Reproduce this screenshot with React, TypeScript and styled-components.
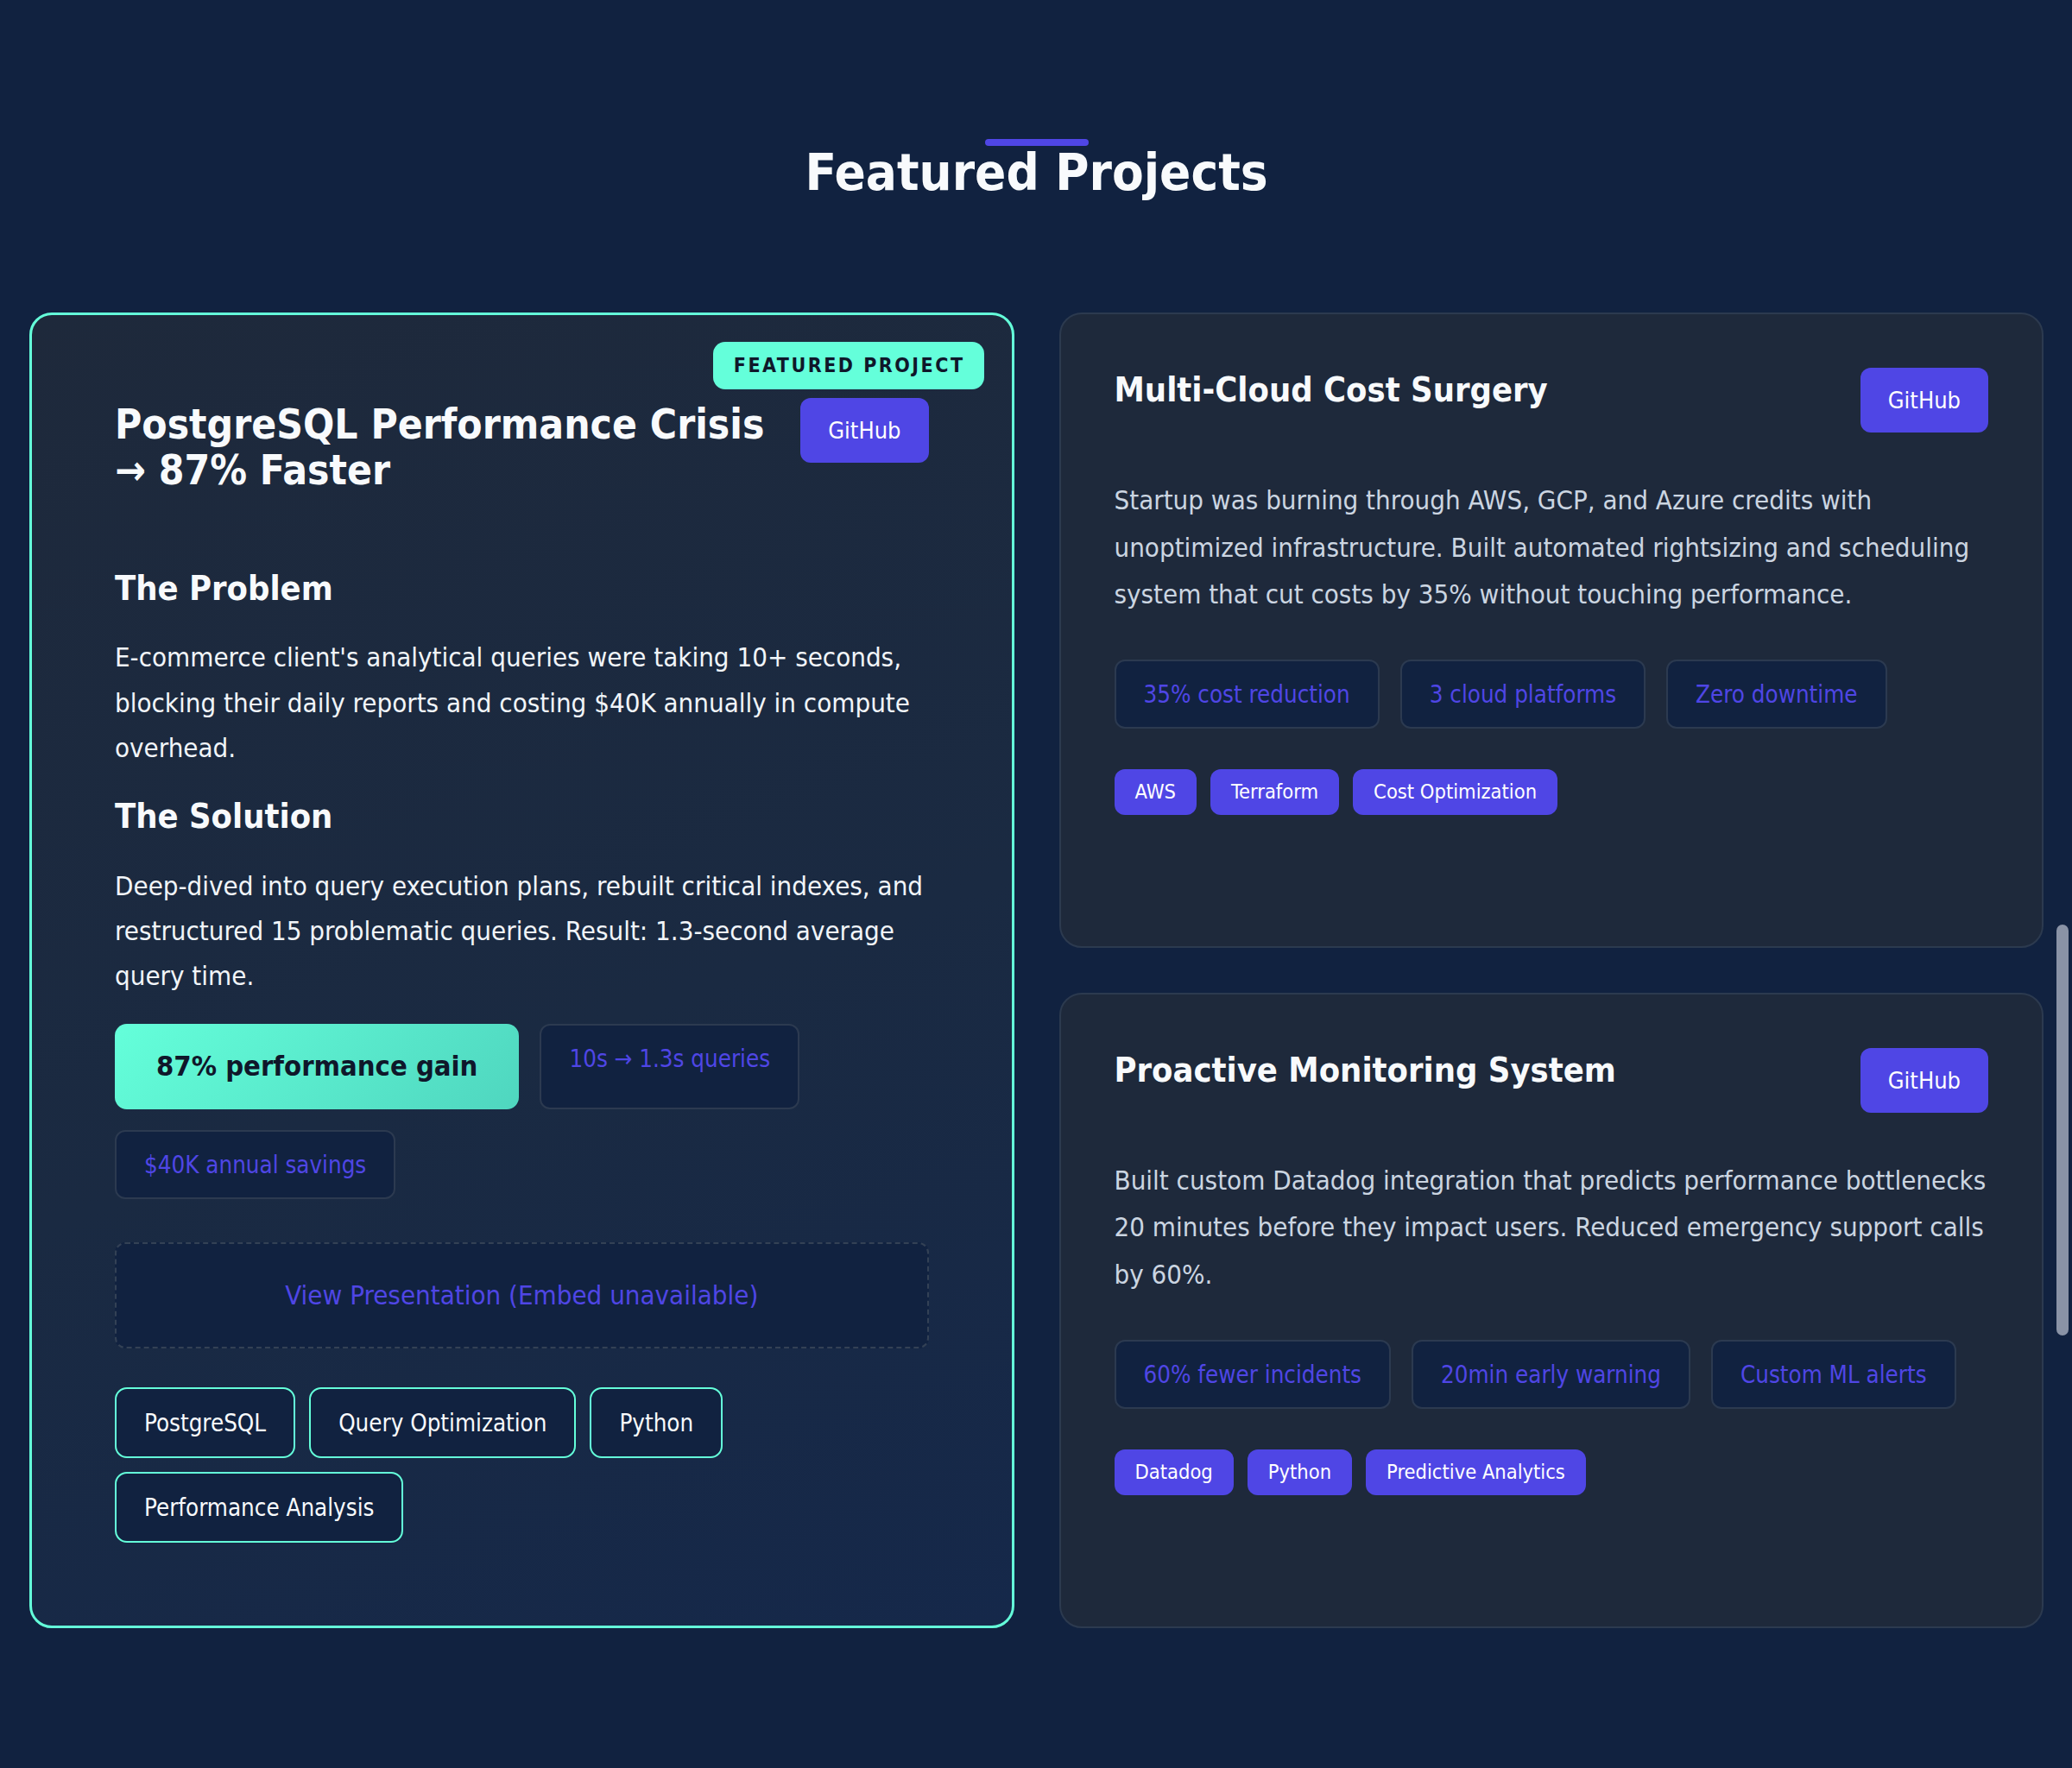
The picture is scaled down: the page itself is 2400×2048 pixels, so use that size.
import React from "react";
import styled, { createGlobalStyle } from "styled-components";

const GlobalStyle = createGlobalStyle`
  html, body {
    margin: 0;
    padding: 0;
    background: #112240;
  }
  body {
    font-family: "DejaVu Sans Condensed", "DejaVu Sans", sans-serif;
    font-stretch: condensed;
    color: #f1f5f9;
    overflow: hidden;
  }
  * { box-sizing: border-box; }
`;

const Section = styled.section`
  min-height: 2048px;
  background: #112240;
  padding: 164px 33px 162px 34px;
`;

const SectionTitle = styled.h2`
  position: relative;
  margin: 0 0 127px;
  text-align: center;
  font-size: 59.5px;
  line-height: 1.2;
  font-weight: 700;
  color: #f8fafc;
  &::before {
    content: "";
    position: absolute;
    top: -3px;
    left: 50%;
    width: 120px;
    height: 8px;
    border-radius: 4px;
    background: #4f46e5;
    transform: translateX(-50%);
  }
`;

const Grid = styled.div`
  display: grid;
  grid-template-columns: 1fr 1fr;
  grid-template-rows: auto auto;
  gap: 52px;
`;

const FeaturedCard = styled.article`
  position: relative;
  grid-row: span 2;
  padding: 96px;
  border: 3px solid #64ffda;
  border-radius: 26px;
  background: linear-gradient(160deg, #1e293b 0%, #1a2a42 55%, #15284a 100%);
`;

const Card = styled.article`
  padding: 62px;
  border: 2px solid #2c3a4f;
  border-radius: 26px;
  background: #1e293b;
`;

const Badge = styled.span`
  position: absolute;
  top: 31px;
  right: 32px;
  padding: 14px 22px 14px 24px;
  border-radius: 14px;
  background: #64ffda;
  color: #0f172a;
  font-size: 23px;
  line-height: 1.15;
  font-weight: 700;
  letter-spacing: 2.5px;
  text-transform: uppercase;
`;

const CardHeader = styled.div<{ $gap: number }>`
  display: flex;
  align-items: flex-start;
  justify-content: space-between;
  gap: 32px;
  margin-bottom: ${(p) => p.$gap}px;
`;

const BigTitle = styled.h3`
  flex: 1;
  margin: 5px 0 0;
  font-size: 47.5px;
  line-height: 1.1;
  font-weight: 700;
  color: #f8fafc;
`;

const CardTitle = styled.h3`
  flex: 1;
  margin: 0;
  font-size: 39.5px;
  line-height: 1.3;
  font-weight: 700;
  color: #f8fafc;
`;

const GitHubButton = styled.a`
  flex-shrink: 0;
  display: inline-block;
  padding: 20px 32px;
  border-radius: 12px;
  background: #4f46e5;
  color: #ffffff;
  font-size: 27px;
  line-height: 1.3;
  text-decoration: none;
`;

const SubHeading = styled.h4`
  margin: 0 0 28px;
  font-size: 39.5px;
  line-height: 1.3;
  font-weight: 700;
  color: #f8fafc;
`;

const Body = styled.p<{ $muted?: boolean; $gap: number }>`
  margin: 0 0 ${(p) => p.$gap}px;
  font-size: 31px;
  line-height: ${(p) => (p.$muted ? 1.75 : 1.69)};
  color: ${(p) => (p.$muted ? "#cbd5e1" : "#f1f5f9")};
`;

const Metrics = styled.div`
  display: flex;
  flex-wrap: wrap;
  gap: 24px;
`;

const Metric = styled.span`
  padding: 16px 32px;
  border: 2px solid #2c3a50;
  border-radius: 12px;
  background: #112240;
  color: #4f46e5;
  font-size: 27.5px;
  line-height: 1.6;
`;

const HighlightMetric = styled.span`
  padding: 22px 48px;
  border-radius: 14px;
  background: linear-gradient(135deg, #64ffda 0%, #4fd6bf 100%);
  color: #0f172a;
  font-size: 32.5px;
  line-height: 1.7;
  font-weight: 700;
`;

const Presentation = styled.div`
  margin-top: 50px;
  padding: 33px 32px;
  border: 2px dashed #334155;
  border-radius: 12px;
  background: #112240;
  color: #4f46e5;
  font-size: 31px;
  line-height: 1.7;
  text-align: center;
`;

const TechList = styled.div<{ $gap: number }>`
  display: flex;
  flex-wrap: wrap;
  gap: 16px;
  margin-top: ${(p) => p.$gap}px;
`;

const TechTag = styled.span`
  padding: 17px 32px;
  border: 2px solid #64ffda;
  border-radius: 14px;
  background: #112240;
  color: #f8fafc;
  font-size: 27.5px;
  line-height: 1.6;
`;

const Chip = styled.span`
  padding: 10px 24px;
  border-radius: 12px;
  background: #4f46e5;
  color: #ffffff;
  font-size: 23.5px;
  line-height: 1.4;
`;

const ScrollThumb = styled.div`
  position: fixed;
  top: 1071px;
  right: 4px;
  width: 14px;
  height: 476px;
  border-radius: 7px;
  background: #8a93a6;
`;

type SideProject = {
  title: string;
  text: string;
  metrics: string[];
  tech: string[];
};

const sideProjects: SideProject[] = [
  {
    title: "Multi-Cloud Cost Surgery",
    text: "Startup was burning through AWS, GCP, and Azure credits with unoptimized infrastructure. Built automated rightsizing and scheduling system that cut costs by 35% without touching performance.",
    metrics: ["35% cost reduction", "3 cloud platforms", "Zero downtime"],
    tech: ["AWS", "Terraform", "Cost Optimization"],
  },
  {
    title: "Proactive Monitoring System",
    text: "Built custom Datadog integration that predicts performance bottlenecks 20 minutes before they impact users. Reduced emergency support calls by 60%.",
    metrics: ["60% fewer incidents", "20min early warning", "Custom ML alerts"],
    tech: ["Datadog", "Python", "Predictive Analytics"],
  },
];

export default function App() {
  return (
    <>
      <GlobalStyle />
      <Section>
        <SectionTitle>Featured Projects</SectionTitle>
        <Grid>
          <FeaturedCard>
            <Badge>Featured Project</Badge>
            <CardHeader $gap={85}>
              <BigTitle>PostgreSQL Performance Crisis → 87% Faster</BigTitle>
              <GitHubButton href="#">GitHub</GitHubButton>
            </CardHeader>
            <SubHeading>The Problem</SubHeading>
            <Body $gap={28}>
              E-commerce client's analytical queries were taking 10+ seconds,
              blocking their daily reports and costing $40K annually in compute
              overhead.
            </Body>
            <SubHeading>The Solution</SubHeading>
            <Body $gap={29}>
              Deep-dived into query execution plans, rebuilt critical indexes,
              and restructured 15 problematic queries. Result: 1.3-second
              average query time.
            </Body>
            <Metrics>
              <HighlightMetric>87% performance gain</HighlightMetric>
              <Metric>10s → 1.3s queries</Metric>
              <Metric>$40K annual savings</Metric>
            </Metrics>
            <Presentation>View Presentation (Embed unavailable)</Presentation>
            <TechList $gap={45}>
              {["PostgreSQL", "Query Optimization", "Python", "Performance Analysis"].map((t) => (
                <TechTag key={t}>{t}</TechTag>
              ))}
            </TechList>
          </FeaturedCard>
          {sideProjects.map((p) => (
            <Card key={p.title}>
              <CardHeader $gap={51}>
                <CardTitle>{p.title}</CardTitle>
                <GitHubButton href="#">GitHub</GitHubButton>
              </CardHeader>
              <Body $muted $gap={49}>
                {p.text}
              </Body>
              <Metrics>
                {p.metrics.map((m) => (
                  <Metric key={m}>{m}</Metric>
                ))}
              </Metrics>
              <TechList $gap={47}>
                {p.tech.map((t) => (
                  <Chip key={t}>{t}</Chip>
                ))}
              </TechList>
            </Card>
          ))}
        </Grid>
      </Section>
      <ScrollThumb />
    </>
  );
}
